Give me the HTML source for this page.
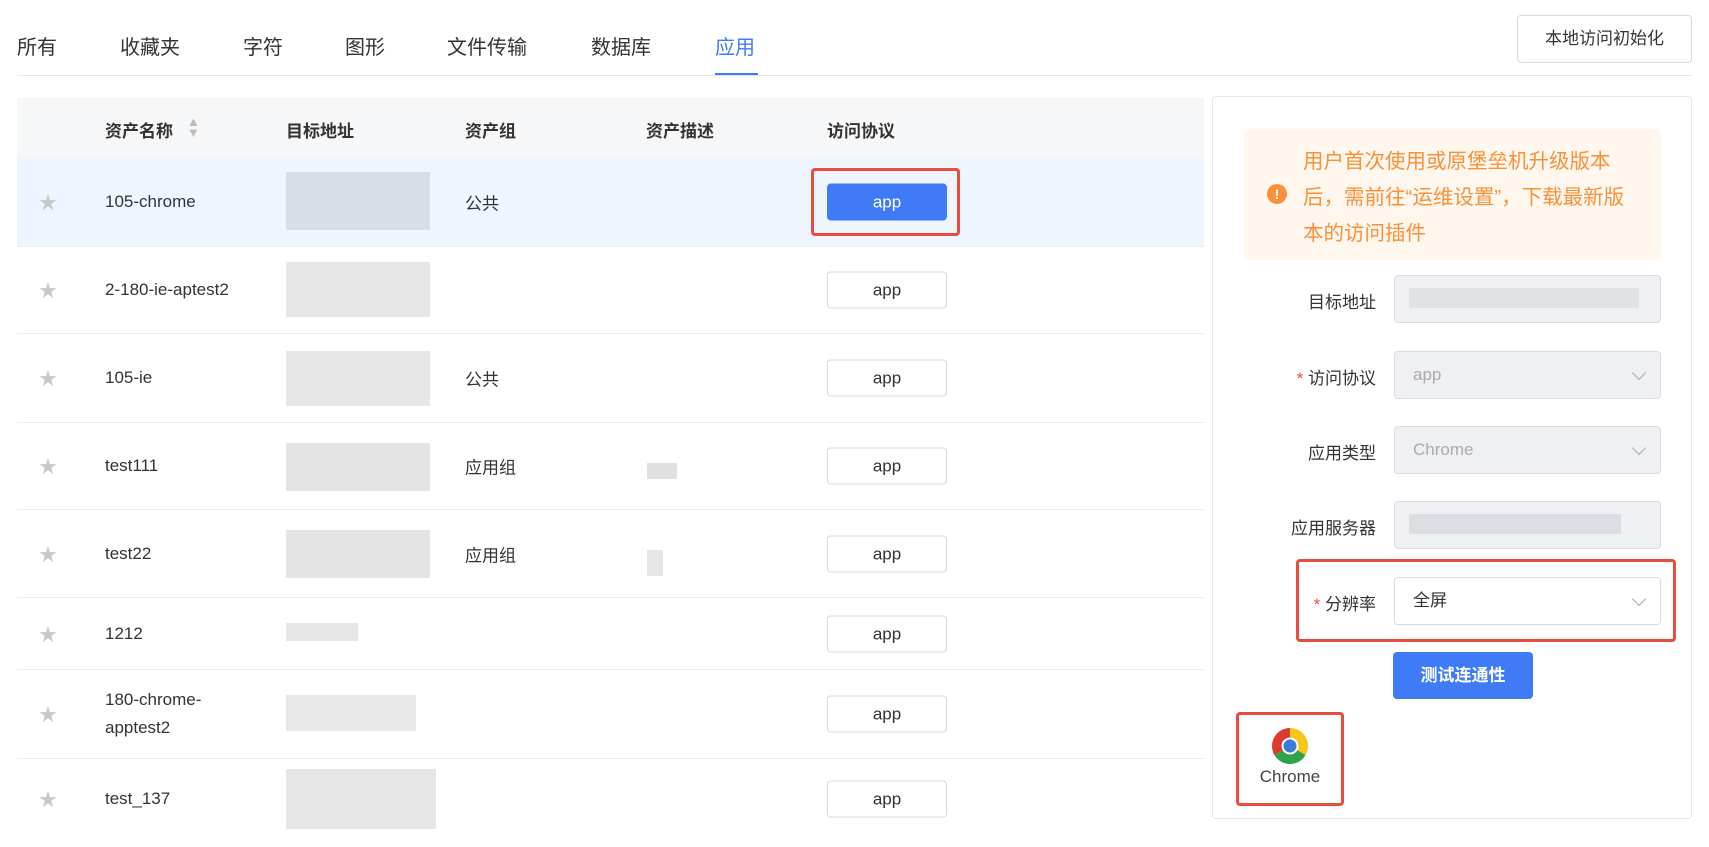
<!DOCTYPE html>
<html><head><meta charset="utf-8">
<style>
*{box-sizing:border-box;margin:0;padding:0}
body{width:1709px;height:839px;overflow:hidden;background:#fff;font-family:"Liberation Sans","Noto Sans CJK SC",sans-serif;color:#333;position:relative}
.abs{position:absolute}
.tab{position:absolute;top:34px;font-size:20px;color:#333;line-height:28px}
.line{left:17px;width:1675px;top:75px;height:1px;background:#e4e6eb}
.th{position:absolute;top:98px;height:60px;left:17px;width:1187px;background:#f6f7f9}
.th span{position:absolute;top:19px;font-size:17px;font-weight:bold;color:#333}
.row{position:absolute;left:17px;width:1187px;border-bottom:1px solid #ebedf0}
.cell{position:absolute;font-size:17px;color:#333;top:50%;transform:translateY(-50%)}
.star{position:absolute;left:22px;top:50%;transform:translateY(-50%);color:#c8c8c8;font-size:18px}
.btn{position:absolute;left:810px;width:120px;height:37px;top:50%;transform:translateY(-50%);border:1px solid #d9d9d9;border-radius:4px;font-size:17px;text-align:center;line-height:35px;color:#333;background:#fff}
.blur{position:absolute;background:#dde0e5}
.lbl{position:absolute;right:333px;font-size:17px;color:#333}
.inp{position:absolute;left:1394px;width:267px;height:48px;border:1px solid #d9dbe0;border-radius:4px;background:#eef0f4;font-size:17px;color:#aaa;padding-left:18px;line-height:46px}
.chev{position:absolute;right:16px;top:16px;width:10px;height:10px;border-right:1.5px solid #aaa;border-bottom:1.5px solid #aaa;transform:rotate(45deg)}
.red{position:absolute;border:3px solid #e94b3c;border-radius:4px}
</style></head><body>
<div class="tab" style="left:17px">所有</div>
<div class="tab" style="left:120px">收藏夹</div>
<div class="tab" style="left:243px">字符</div>
<div class="tab" style="left:345px">图形</div>
<div class="tab" style="left:447px">文件传输</div>
<div class="tab" style="left:591px">数据库</div>
<div class="tab" style="left:715px;color:#3f7bf6">应用</div>
<div class="abs" style="left:715px;top:73px;width:43px;height:3px;background:#3f7bf6"></div>
<div class="abs line"></div>
<div class="abs" style="left:1517px;top:15px;width:175px;height:48px;border:1px solid #d9d9d9;border-radius:4px;font-size:17px;text-align:center;line-height:46px">本地访问初始化</div>

<div class="th">
<span style="left:88px">资产名称</span>
<span style="left:170px;top:18px;font-size:13px;color:#bbb;line-height:11px;font-weight:normal">▲<br>▼</span>
<span style="left:269px">目标地址</span>
<span style="left:448px">资产组</span>
<span style="left:629px">资产描述</span>
<span style="left:810px">访问协议</span>
</div>

<div class="row" style="top:158px;height:89px;background:#eef5fe">
<span class="star">★</span><span class="cell" style="left:88px">105-chrome</span>
<div class="blur" style="left:269px;top:14px;width:144px;height:58px;background:#d8dde6"></div>
<span class="cell" style="left:448px">公共</span>
<div class="btn" style="background:#3f7bf6;border-color:#3f7bf6;color:#fff">app</div>
</div>
<div class="row" style="top:247px;height:87px">
<span class="star">★</span><span class="cell" style="left:88px">2-180-ie-aptest2</span>
<div class="blur" style="left:269px;top:15px;width:144px;height:55px;background:#e6e6e6"></div>
<div class="btn">app</div></div>
<div class="row" style="top:334px;height:89px">
<span class="star">★</span><span class="cell" style="left:88px">105-ie</span>
<div class="blur" style="left:269px;top:17px;width:144px;height:55px;background:#e6e6e6"></div>
<span class="cell" style="left:448px">公共</span>
<div class="btn">app</div></div>
<div class="row" style="top:423px;height:87px">
<span class="star">★</span><span class="cell" style="left:88px">test111</span>
<div class="blur" style="left:269px;top:20px;width:144px;height:48px;background:#e4e4e4"></div>
<span class="cell" style="left:448px">应用组</span>
<div class="blur" style="left:630px;top:40px;width:30px;height:16px;background:#e0e0e0"></div>
<div class="btn">app</div></div>
<div class="row" style="top:510px;height:88px">
<span class="star">★</span><span class="cell" style="left:88px">test22</span>
<div class="blur" style="left:269px;top:20px;width:144px;height:48px;background:#e4e4e4"></div>
<span class="cell" style="left:448px">应用组</span>
<div class="blur" style="left:630px;top:40px;width:16px;height:26px;background:#e6e6e6"></div>
<div class="btn">app</div></div>
<div class="row" style="top:598px;height:72px">
<span class="star">★</span><span class="cell" style="left:88px">1212</span>
<div class="blur" style="left:269px;top:25px;width:72px;height:18px;background:#e6e6e6"></div>
<div class="btn">app</div></div>
<div class="row" style="top:670px;height:89px">
<span class="star">★</span><span class="cell" style="left:88px;line-height:28px">180-chrome-<br>apptest2</span>
<div class="blur" style="left:269px;top:25px;width:130px;height:36px;background:#e8e8e8"></div>
<div class="btn">app</div></div>
<div class="row" style="top:759px;height:88px;border:none">
<span class="star" style="top:45%">★</span><span class="cell" style="left:88px;top:45%">test_137</span>
<div class="blur" style="left:269px;top:10px;width:150px;height:60px;background:#e6e6e6"></div>
<div class="btn" style="top:45%">app</div></div>

<div class="red" style="left:811px;top:168px;width:149px;height:68px"></div>

<div class="abs" style="left:1212px;top:96px;width:480px;height:723px;border:1px solid #e4e6eb;border-radius:4px"></div>
<div class="abs" style="left:1244px;top:129px;width:417px;height:131px;background:#fff7ee;border-radius:4px"></div>
<div class="abs" style="left:1267px;top:184px;width:20px;height:20px;border-radius:50%;background:#f7913a;color:#fff;font-size:14px;font-weight:bold;text-align:center;line-height:20px">!</div>
<div class="abs" style="left:1303px;top:144px;width:330px;font-size:20.5px;line-height:36px;color:#f7913a">用户首次使用或原堡垒机升级版本后，需前往“运维设置”，下载最新版本的访问插件</div>

<div class="lbl" style="top:288px">目标地址</div>
<div class="inp" style="top:275px"><div class="blur" style="left:14px;top:12px;width:230px;height:20px;background:#e0e2e6"></div></div>
<div class="lbl" style="top:364px"><span style="color:#f5463c">* </span>访问协议</div>
<div class="inp" style="top:351px">app<div class="chev"></div></div>
<div class="lbl" style="top:439px">应用类型</div>
<div class="inp" style="top:426px">Chrome<div class="chev"></div></div>
<div class="lbl" style="top:514px">应用服务器</div>
<div class="inp" style="top:501px"><div class="blur" style="left:14px;top:12px;width:212px;height:20px;background:#dcdee3"></div></div>
<div class="lbl" style="top:590px"><span style="color:#f5463c">* </span>分辨率</div>
<div class="inp" style="top:577px;background:#fff;color:#333">全屏<div class="chev"></div></div>
<div class="red" style="left:1296px;top:559px;width:380px;height:83px"></div>
<div class="abs" style="left:1393px;top:652px;width:140px;height:47px;background:#3f7bf6;border-radius:4px;color:#fff;font-size:17px;font-weight:bold;text-align:center;line-height:47px">测试连通性</div>

<div class="red" style="left:1236px;top:712px;width:108px;height:94px"></div>
<svg class="abs" style="left:1271px;top:727px" width="38" height="38" viewBox="0 0 38 38">
<path d="M19 19 L19 1 A18 18 0 0 1 34.6 28 Z" fill="#f5c518"/>
<path d="M19 19 L34.6 28 A18 18 0 0 1 3.4 28 Z" fill="#2fa24c"/>
<path d="M19 19 L3.4 28 A18 18 0 0 1 19 1 Z" fill="#dd3b2f"/>
<circle cx="19" cy="19" r="8.5" fill="#fff"/><circle cx="19" cy="19" r="6.5" fill="#3a7bd5"/>
</svg>
<div class="abs" style="left:1236px;top:767px;width:108px;text-align:center;font-size:17px;color:#444">Chrome</div>
</body></html>
